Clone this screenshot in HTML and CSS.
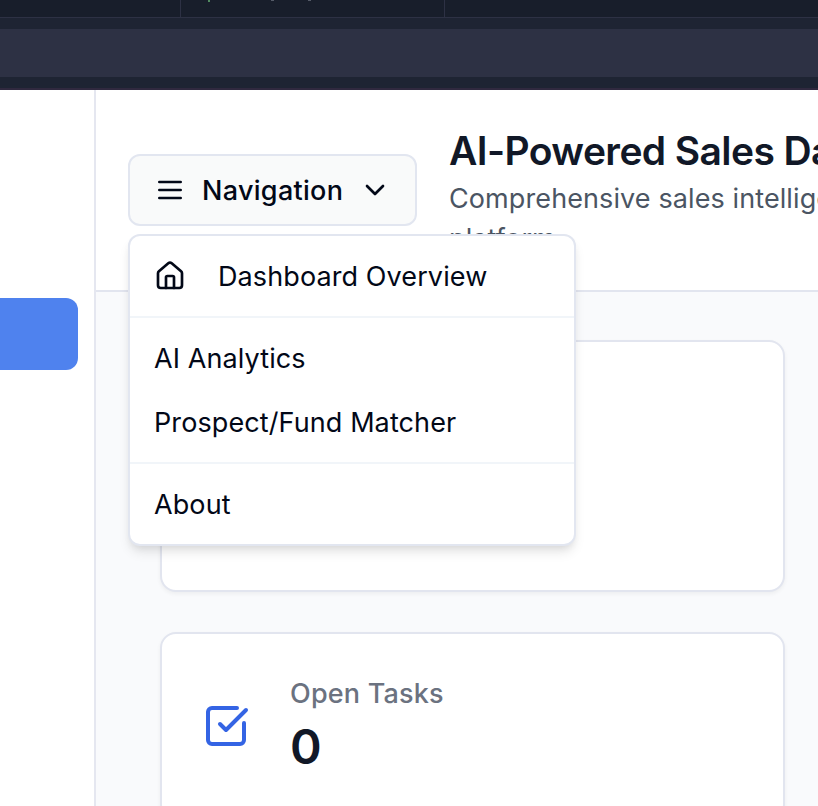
FILE: index.html
```html
<!DOCTYPE html>
<html lang="en">
<head>
<meta charset="utf-8">
<title>AI-Powered Sales Dashboard</title>
<link rel="stylesheet" href="styles.css">
</head>
<body>
<div class="chrome">
  <div class="tabs"><div class="tab tab-first"></div><div class="tab tab-second"><i class="mark mark-green"></i><i class="mark"></i><i class="mark mark-last"></i></div></div>
  <div class="toolbar"></div>
</div>
<div class="app">
  <aside class="sidebar"><div class="active-item"></div></aside>
  <div class="page">
    <header class="header">
      <nav class="nav">
        <button class="nav-button">
          <svg class="icon" viewBox="0 0 24 24"><path d="M4 12h16M4 6h16M4 18h16"/></svg>
          <span class="nav-label">Navigation</span>
          <svg class="icon" viewBox="0 0 24 24"><path d="m6 9 6 6 6-6"/></svg>
        </button>
        <div class="menu">
          <a class="item item-icon"><svg class="icon" viewBox="0 0 24 24"><path d="M15 21v-8a1 1 0 0 0-1-1h-4a1 1 0 0 0-1 1v8"/><path d="M3 10a2 2 0 0 1 .709-1.528l7-5.999a2 2 0 0 1 2.582 0l7 5.999A2 2 0 0 1 21 10v9a2 2 0 0 1-2 2H5a2 2 0 0 1-2-2z"/></svg><span class="item-label">Dashboard Overview</span></a>
          <div class="separator"></div>
          <a class="item"><span class="item-label">AI Analytics</span></a>
          <a class="item"><span class="item-label">Prospect/Fund Matcher</span></a>
          <div class="separator"></div>
          <a class="item"><span class="item-label">About</span></a>
        </div>
      </nav>
      <div class="heading">
        <h1>AI-Powered Sales Dashboard</h1>
        <p>Comprehensive sales intelligence<br>platform</p>
      </div>
    </header>
    <main class="main">
      <section class="card card-first"></section>
      <section class="card">
        <svg class="task-icon" viewBox="0 0 24 24"><path d="M21 10.5V19a2 2 0 0 1-2 2H5a2 2 0 0 1-2-2V5a2 2 0 0 1 2-2h12.5"/><path d="m9 11 3 3L22 4"/></svg>
        <div><div class="label">Open Tasks</div><div class="value">0</div></div>
      </section>
    </main>
  </div>
</div>
</body>
</html>
```
FILE: styles.css
```css
* { box-sizing: border-box; }
body { margin: 0; height: 806px; overflow: hidden; display: flex; flex-direction: column; font-family: Inter, "Liberation Sans", sans-serif; font-size: 27px; line-height: 40px; letter-spacing: 0.1px; color: #020817; background: #fff; }
.chrome { flex: none; height: 90px; background: #1e2433; border-bottom: 2px solid #30293f; }
.tabs { height: 18px; display: flex; background: #181e2b; border-bottom: 1px solid #2d3144; }
.tab { border-right: 1px solid #2d3144; }
.tab-first { width: 181px; }
.tab-second { width: 264px; display: flex; padding-left: 27px; }
.mark { width: 3px; height: 1px; background: #555b68; margin-right: 34px; }
.mark-green { width: 2px; height: 2px; background: #518a60; margin-right: 61px; }
.mark-last { margin-right: 0; }
.toolbar { height: 48px; margin-top: 11px; background: #2d3144; }
.app { flex: 1; min-height: 0; display: flex; }
.sidebar { flex: none; width: 96px; border-right: 2px solid #e5e7f0; padding-top: 208px; }
.active-item { width: 78px; height: 72px; background: #4f82ee; border-radius: 0 12px 12px 0; }
.page { flex: 1; min-width: 0; background: #f9fafc; }
.header { height: 202px; padding: 32px 0 32px 32px; display: flex; align-items: center; gap: 32px; background: #fff; border-bottom: 2px solid #e2e5ef; }
.nav { position: relative; flex: none; }
.nav-button { display: flex; align-items: center; gap: 16px; width: 289px; height: 72px; padding: 0 24px; border: 2px solid #e2e6f0; border-radius: 12px; background: #f9fafa; color: inherit; font: inherit; font-weight: 500; letter-spacing: 0.3px; white-space: nowrap; }
.nav-label, .item-label { padding-top: 1px; }
.icon { flex: none; width: 32px; height: 32px; }
.icon, .task-icon { fill: none; stroke: currentColor; stroke-width: 2; stroke-linecap: round; stroke-linejoin: round; }
.menu { position: absolute; z-index: 2; top: 80px; left: 0; width: 448px; padding: 8px 0; background: #fff; border: 2px solid #e2e6f0; border-radius: 12px; box-shadow: 0 8px 12px -2px rgb(0 0 0 / 10%), 0 4px 8px -4px rgb(0 0 0 / 10%); }
.item { display: flex; align-items: center; height: 64px; padding: 0 24px; white-space: nowrap; }
.item-icon { gap: 32px; }
.separator { height: 2px; margin: 8px 0; background: #f1f5f9; }
.heading { flex: 1; min-width: 0; overflow: hidden; padding-top: 2px; white-space: nowrap; }
h1 { margin: 0; font-size: 39px; line-height: 56px; font-weight: 600; letter-spacing: -0.6px; color: #111827; }
p { margin: 0; color: #4b5563; }
.main { padding: 48px 33px 0 64px; display: grid; gap: 40px; }
.card { display: flex; align-items: center; gap: 40px; height: 188px; padding: 0 40px; background: #fff; border: 2px solid #e2e5ef; border-radius: 16px; box-shadow: 0 2px 4px rgb(0 0 0 / 5%); }
.card-first { height: 252px; }
.task-icon { width: 48px; height: 48px; color: #3464e4; }
.label { font-weight: 500; letter-spacing: 0.2px; color: #6b7280; }
.value { padding-top: 2px; font-size: 48px; line-height: 62px; font-weight: 600; color: #111827; }
```
